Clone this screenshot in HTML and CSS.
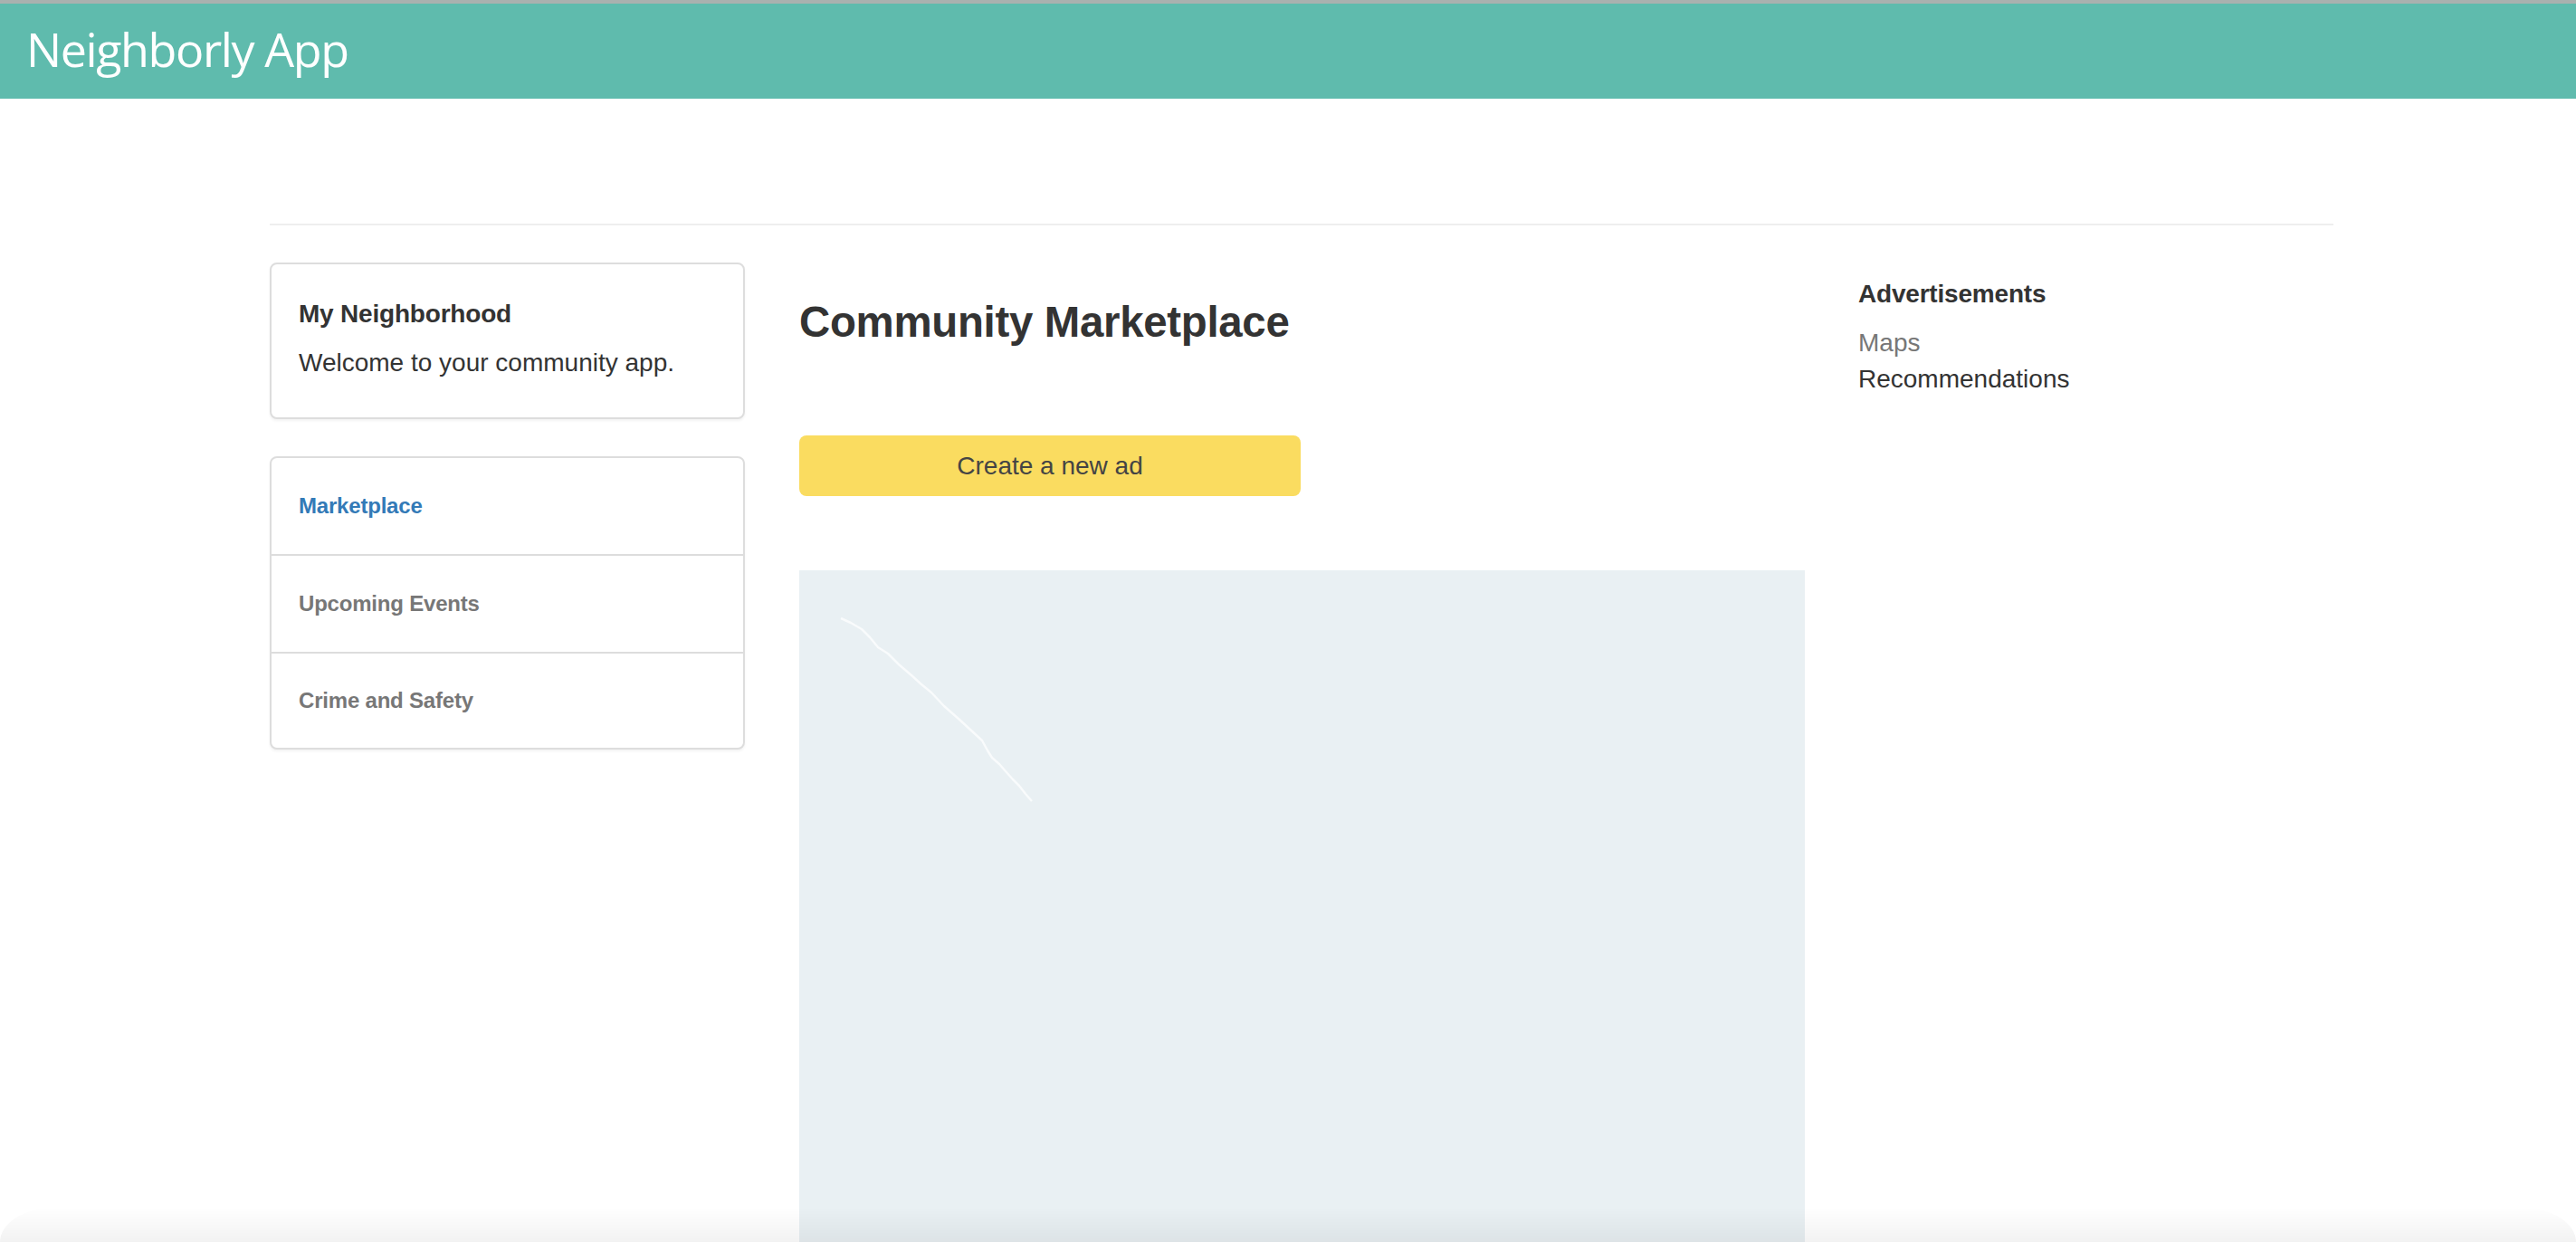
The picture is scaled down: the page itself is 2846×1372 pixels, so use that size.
FILE: index.html
```html
<!DOCTYPE html>
<html lang="en">
<head>
<meta charset="utf-8">
<title>Neighborly App</title>
<link rel="stylesheet" href="styles.css">
</head>
<body>
<header class="topbar">
  <span class="brand">Neighborly App</span>
</header>
<main class="container">
  <hr class="rule">
  <div class="row">
    <aside class="col-left">
      <section class="card intro">
        <h4 class="intro-title">My Neighborhood</h4>
        <p class="intro-text">Welcome to your community app.</p>
      </section>
      <nav class="card side-nav">
        <a class="nav-item active" href="#">Marketplace</a>
        <a class="nav-item" href="#">Upcoming Events</a>
        <a class="nav-item" href="#">Crime and Safety</a>
      </nav>
    </aside>
    <section class="col-main">
      <h2 class="page-title">Community Marketplace</h2>
      <button class="btn-ad" type="button">Create a new ad</button>
      <div class="map">
        <svg class="road" viewBox="0 0 1111 742" width="1111" height="742">
          <polyline points="46,53 57,58 69,65 78,74 87,85 98,92 110,104 124,116 135,126 146,135 160,150 176,164 189,176 202,188 208,199 213,207 221,214 228,222 236,231 243,238 250,247 257,255" fill="none" stroke="#ffffff" stroke-width="2.5" stroke-opacity="0.7" stroke-linejoin="round"/>
        </svg>
      </div>
    </section>
    <aside class="col-right">
      <h4 class="ads-title">Advertisements</h4>
      <ul class="ads-list">
        <li class="ads-item muted">Maps</li>
        <li class="ads-item">Recommendations</li>
      </ul>
    </aside>
  </div>
</main>
<div class="bottom-fade"></div>
</body>
</html>
```
FILE: styles.css
```css
html, body {
  margin: 0;
  padding: 0;
  background: #ffffff;
}

body {
  font-family: "Liberation Sans", Arial, Helvetica, sans-serif;
  font-size: 28px;
  line-height: 40px;
  color: #333333;
  overflow: hidden;
}

.topbar {
  height: 105px;
  border-top: 4px solid #a9b1af;
  background: #5fbbad;
  display: flex;
  align-items: flex-start;
  padding-left: 29px;
}

.brand {
  font-family: "Open Sans", "Noto Sans", sans-serif;
  font-size: 52px;
  line-height: 52px;
  margin-top: 24px;
  color: #ffffff;
  letter-spacing: -1.4px;
}

.container {
  width: 2280px;
  margin-left: 298px;
}

.rule {
  margin: 138px 0 0;
  border: 0;
  border-top: 2px solid #eeeeee;
  height: 0;
}

.row {
  display: grid;
  grid-template-columns: 525px 1110px 525px;
  column-gap: 60px;
  margin-top: 41px;
  align-items: start;
}

.col-left {
  display: flex;
  flex-direction: column;
  gap: 41px;
}

.card {
  border: 2px solid #dddddd;
  border-radius: 8px;
  background: #ffffff;
  box-shadow: 0 2px 3px rgba(0, 0, 0, 0.05);
}

.intro {
  padding: 35px 30px 0;
  height: 134px;
}

.intro-title {
  margin: 0 0 14px;
  font-size: 28px;
  line-height: 40px;
  font-weight: 700;
  letter-spacing: -0.2px;
}

.intro-text {
  margin: 0;
}

.side-nav {
  display: flex;
  flex-direction: column;
}

.nav-item {
  display: flex;
  align-items: center;
  height: 106px;
  padding: 0 30px;
  font-size: 24px;
  font-weight: 700;
  color: #777777;
  text-decoration: none;
  letter-spacing: -0.2px;
}

.nav-item + .nav-item {
  border-top: 2px solid #dddddd;
}

.nav-item:last-child {
  height: 104px;
}

.nav-item.active {
  color: #337ab7;
}

.col-main {
  display: flex;
  flex-direction: column;
  align-items: flex-start;
}

.page-title {
  margin: 39px 0 0;
  font-size: 47.4px;
  line-height: 54px;
  font-weight: 700;
  color: #333333;
  letter-spacing: -0.3px;
}

.btn-ad {
  margin-top: 98px;
  width: 554px;
  height: 67px;
  border: 0;
  border-radius: 8px;
  background: #fadc60;
  color: #444444;
  font-family: "Liberation Sans", Arial, sans-serif;
  font-size: 28px;
  padding: 0;
}

.map {
  position: relative;
  margin-top: 82px;
  width: 1111px;
  height: 742px;
  background: #e9f0f3;
}

.road {
  position: absolute;
  left: 0;
  top: 0;
}

.ads-title {
  margin: 15px 0 14px;
  font-size: 28px;
  line-height: 40px;
  font-weight: 700;
  letter-spacing: -0.2px;
}

.ads-list {
  list-style: none;
  margin: 0;
  padding: 0;
}

.ads-item {
  line-height: 40px;
  color: #333333;
}

.ads-item.muted {
  color: #777777;
}

.bottom-fade {
  position: fixed;
  left: 0;
  right: 0;
  bottom: 0;
  height: 38px;
  border-radius: 60px 60px 0 0 / 38px 38px 0 0;
  background: linear-gradient(to bottom, rgba(0, 0, 0, 0), rgba(0, 0, 0, 0.05));
  pointer-events: none;
}
```
